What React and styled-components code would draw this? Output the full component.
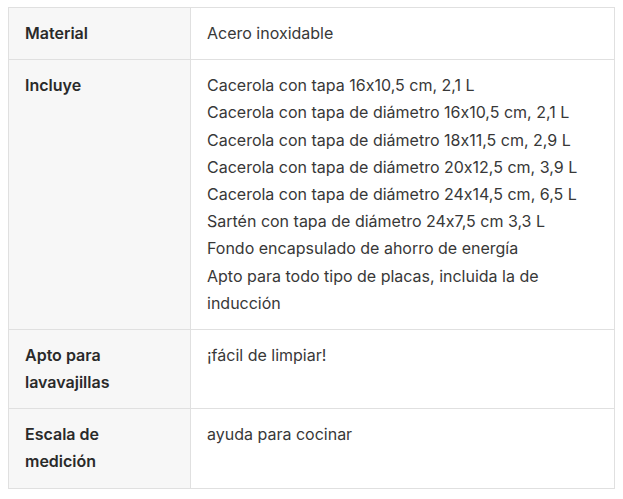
import styled, { createGlobalStyle } from 'styled-components';

const GlobalStyle = createGlobalStyle`
    body {
        margin: 7px 8px 8px;
        background: #fff;
        font-family: Inter, "Liberation Sans", sans-serif;
        font-feature-settings: "calt" 0;
        color: #333;
    }
`;

const specs = [
    { label: 'Material', values: ['Acero inoxidable'] },
    {
        label: 'Incluye',
        values: [
            'Cacerola con tapa 16x10,5 cm, 2,1 L',
            'Cacerola con tapa de diámetro 16x10,5 cm, 2,1 L',
            'Cacerola con tapa de diámetro 18x11,5 cm, 2,9 L',
            'Cacerola con tapa de diámetro 20x12,5 cm, 3,9 L',
            'Cacerola con tapa de diámetro 24x14,5 cm, 6,5 L',
            'Sartén con tapa de diámetro 24x7,5 cm 3,3 L',
            'Fondo encapsulado de ahorro de energía',
            'Apto para todo tipo de placas, incluida la de inducción'
        ]
    },
    { label: 'Apto para lavavajillas', values: ['¡fácil de limpiar!'] },
    { label: 'Escala de medición', values: ['ayuda para cocinar'] }
];

function App() {
    return (
        <>
            <GlobalStyle />
            <SpecTable>
                <tbody>
                    {specs.map((row) => (
                        <tr key={row.label}>
                            <Label>{row.label}</Label>
                            <Value>
                                {row.values.map((v) => (
                                    <div key={v}>{v}</div>
                                ))}
                            </Value>
                        </tr>
                    ))}
                </tbody>
            </SpecTable>
        </>
    );
}

const SpecTable = styled.table`
    width: 100%;
    border-collapse: collapse;
    border: 1px solid #e0e0e0;
    font-size: 16px;
    line-height: 1.7;
`;

const Label = styled.th`
    width: 149px;
    padding: 12px 16px;
    background: #f7f7f7;
    border: 1px solid #e0e0e0;
    text-align: left;
    vertical-align: top;
    font-weight: 600;
    color: #2a2a2a;
`;

const Value = styled.td`
    padding: 12px 16px;
    border: 1px solid #e0e0e0;
    vertical-align: top;
    font-weight: 400;
    color: #383838;
`;

export default App;
